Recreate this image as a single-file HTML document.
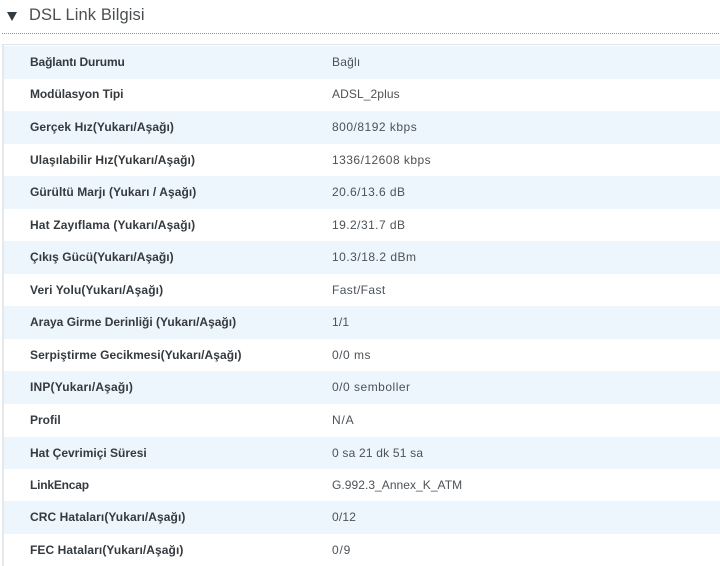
<!DOCTYPE html>
<html lang="tr">
<head>
<meta charset="utf-8">
<style>
html,body{margin:0;padding:0;background:#fff}
body{width:720px;height:565px;overflow:hidden;position:relative;font-family:"Liberation Sans",sans-serif;filter:blur(.25px)}
.tri{position:absolute;left:6.5px;top:12px;width:0;height:0;border-left:5px solid transparent;border-right:5px solid transparent;border-top:9px solid #333a40}
.title{position:absolute;left:29px;top:5px;font-size:16.5px;line-height:20px;color:#4a4f54;letter-spacing:.1px}
.dots{position:absolute;left:2px;right:0;top:33px;height:1px;background:repeating-linear-gradient(90deg,#8f8f8f 0 1px,#fff 1px 2px)}
.tbl{position:absolute;left:2px;top:44px;width:718px;height:521px;border-left:2px solid #e6e8ea;border-top:1px solid #e2e5e8;overflow:hidden}
.r{position:absolute;left:0;right:0;height:32.53px;line-height:33px;font-size:12px;white-space:nowrap}
.r:nth-child(odd){background:#edf6fd}
.r b{position:absolute;left:26px;color:#353a3f;font-weight:bold}
.r span{position:absolute;left:328px;color:#4c5257;letter-spacing:.2px}
</style>
</head>
<body>
<div class="tri"></div>
<div class="title">DSL Link Bilgisi</div>
<div class="dots"></div>
<div class="tbl">
<div class="r" style="top:1px"><b style="letter-spacing:-.13px">Bağlantı Durumu</b><span>Bağlı</span></div>
<div class="r" style="top:33px"><b style="letter-spacing:-.07px">Modülasyon Tipi</b><span style="letter-spacing:.1px">ADSL_2plus</span></div>
<div class="r" style="top:66px"><b style="letter-spacing:.08px">Gerçek Hız(Yukarı/Aşağı)</b><span style="letter-spacing:.5px">800/8192 kbps</span></div>
<div class="r" style="top:98.6px"><b style="letter-spacing:.1px">Ulaşılabilir Hız(Yukarı/Aşağı)</b><span style="letter-spacing:.47px">1336/12608 kbps</span></div>
<div class="r" style="top:131.1px"><b style="letter-spacing:.07px">Gürültü Marjı (Yukarı / Aşağı)</b><span style="letter-spacing:.45px">20.6/13.6 dB</span></div>
<div class="r" style="top:163.6px"><b style="letter-spacing:.14px">Hat Zayıflama (Yukarı/Aşağı)</b><span style="letter-spacing:.45px">19.2/31.7 dB</span></div>
<div class="r" style="top:196.2px"><b style="letter-spacing:.04px">Çıkış Gücü(Yukarı/Aşağı)</b><span style="letter-spacing:.5px">10.3/18.2 dBm</span></div>
<div class="r" style="top:228.7px"><b style="letter-spacing:.13px">Veri Yolu(Yukarı/Aşağı)</b><span style="letter-spacing:.4px">Fast/Fast</span></div>
<div class="r" style="top:261.2px"><b>Araya Girme Derinliği (Yukarı/Aşağı)</b><span>1/1</span></div>
<div class="r" style="top:293.8px"><b style="letter-spacing:.06px">Serpiştirme Gecikmesi(Yukarı/Aşağı)</b><span style="letter-spacing:.5px">0/0 ms</span></div>
<div class="r" style="top:326.3px"><b style="letter-spacing:.18px">INP(Yukarı/Aşağı)</b><span style="letter-spacing:.5px">0/0 semboller</span></div>
<div class="r" style="top:358.8px"><b>Profil</b><span style="letter-spacing:.8px">N/A</span></div>
<div class="r" style="top:391.8px"><b>Hat Çevrimiçi Süresi</b><span>0 sa 21 dk 51 sa</span></div>
<div class="r" style="top:423.9px"><b style="letter-spacing:-.2px">LinkEncap</b><span style="letter-spacing:.05px">G.992.3_Annex_K_ATM</span></div>
<div class="r" style="top:456.4px"><b style="letter-spacing:.08px">CRC Hataları(Yukarı/Aşağı)</b><span>0/12</span></div>
<div class="r" style="top:489px"><b style="letter-spacing:.08px">FEC Hataları(Yukarı/Aşağı)</b><span style="letter-spacing:.8px">0/9</span></div>
</div>
</body>
</html>
